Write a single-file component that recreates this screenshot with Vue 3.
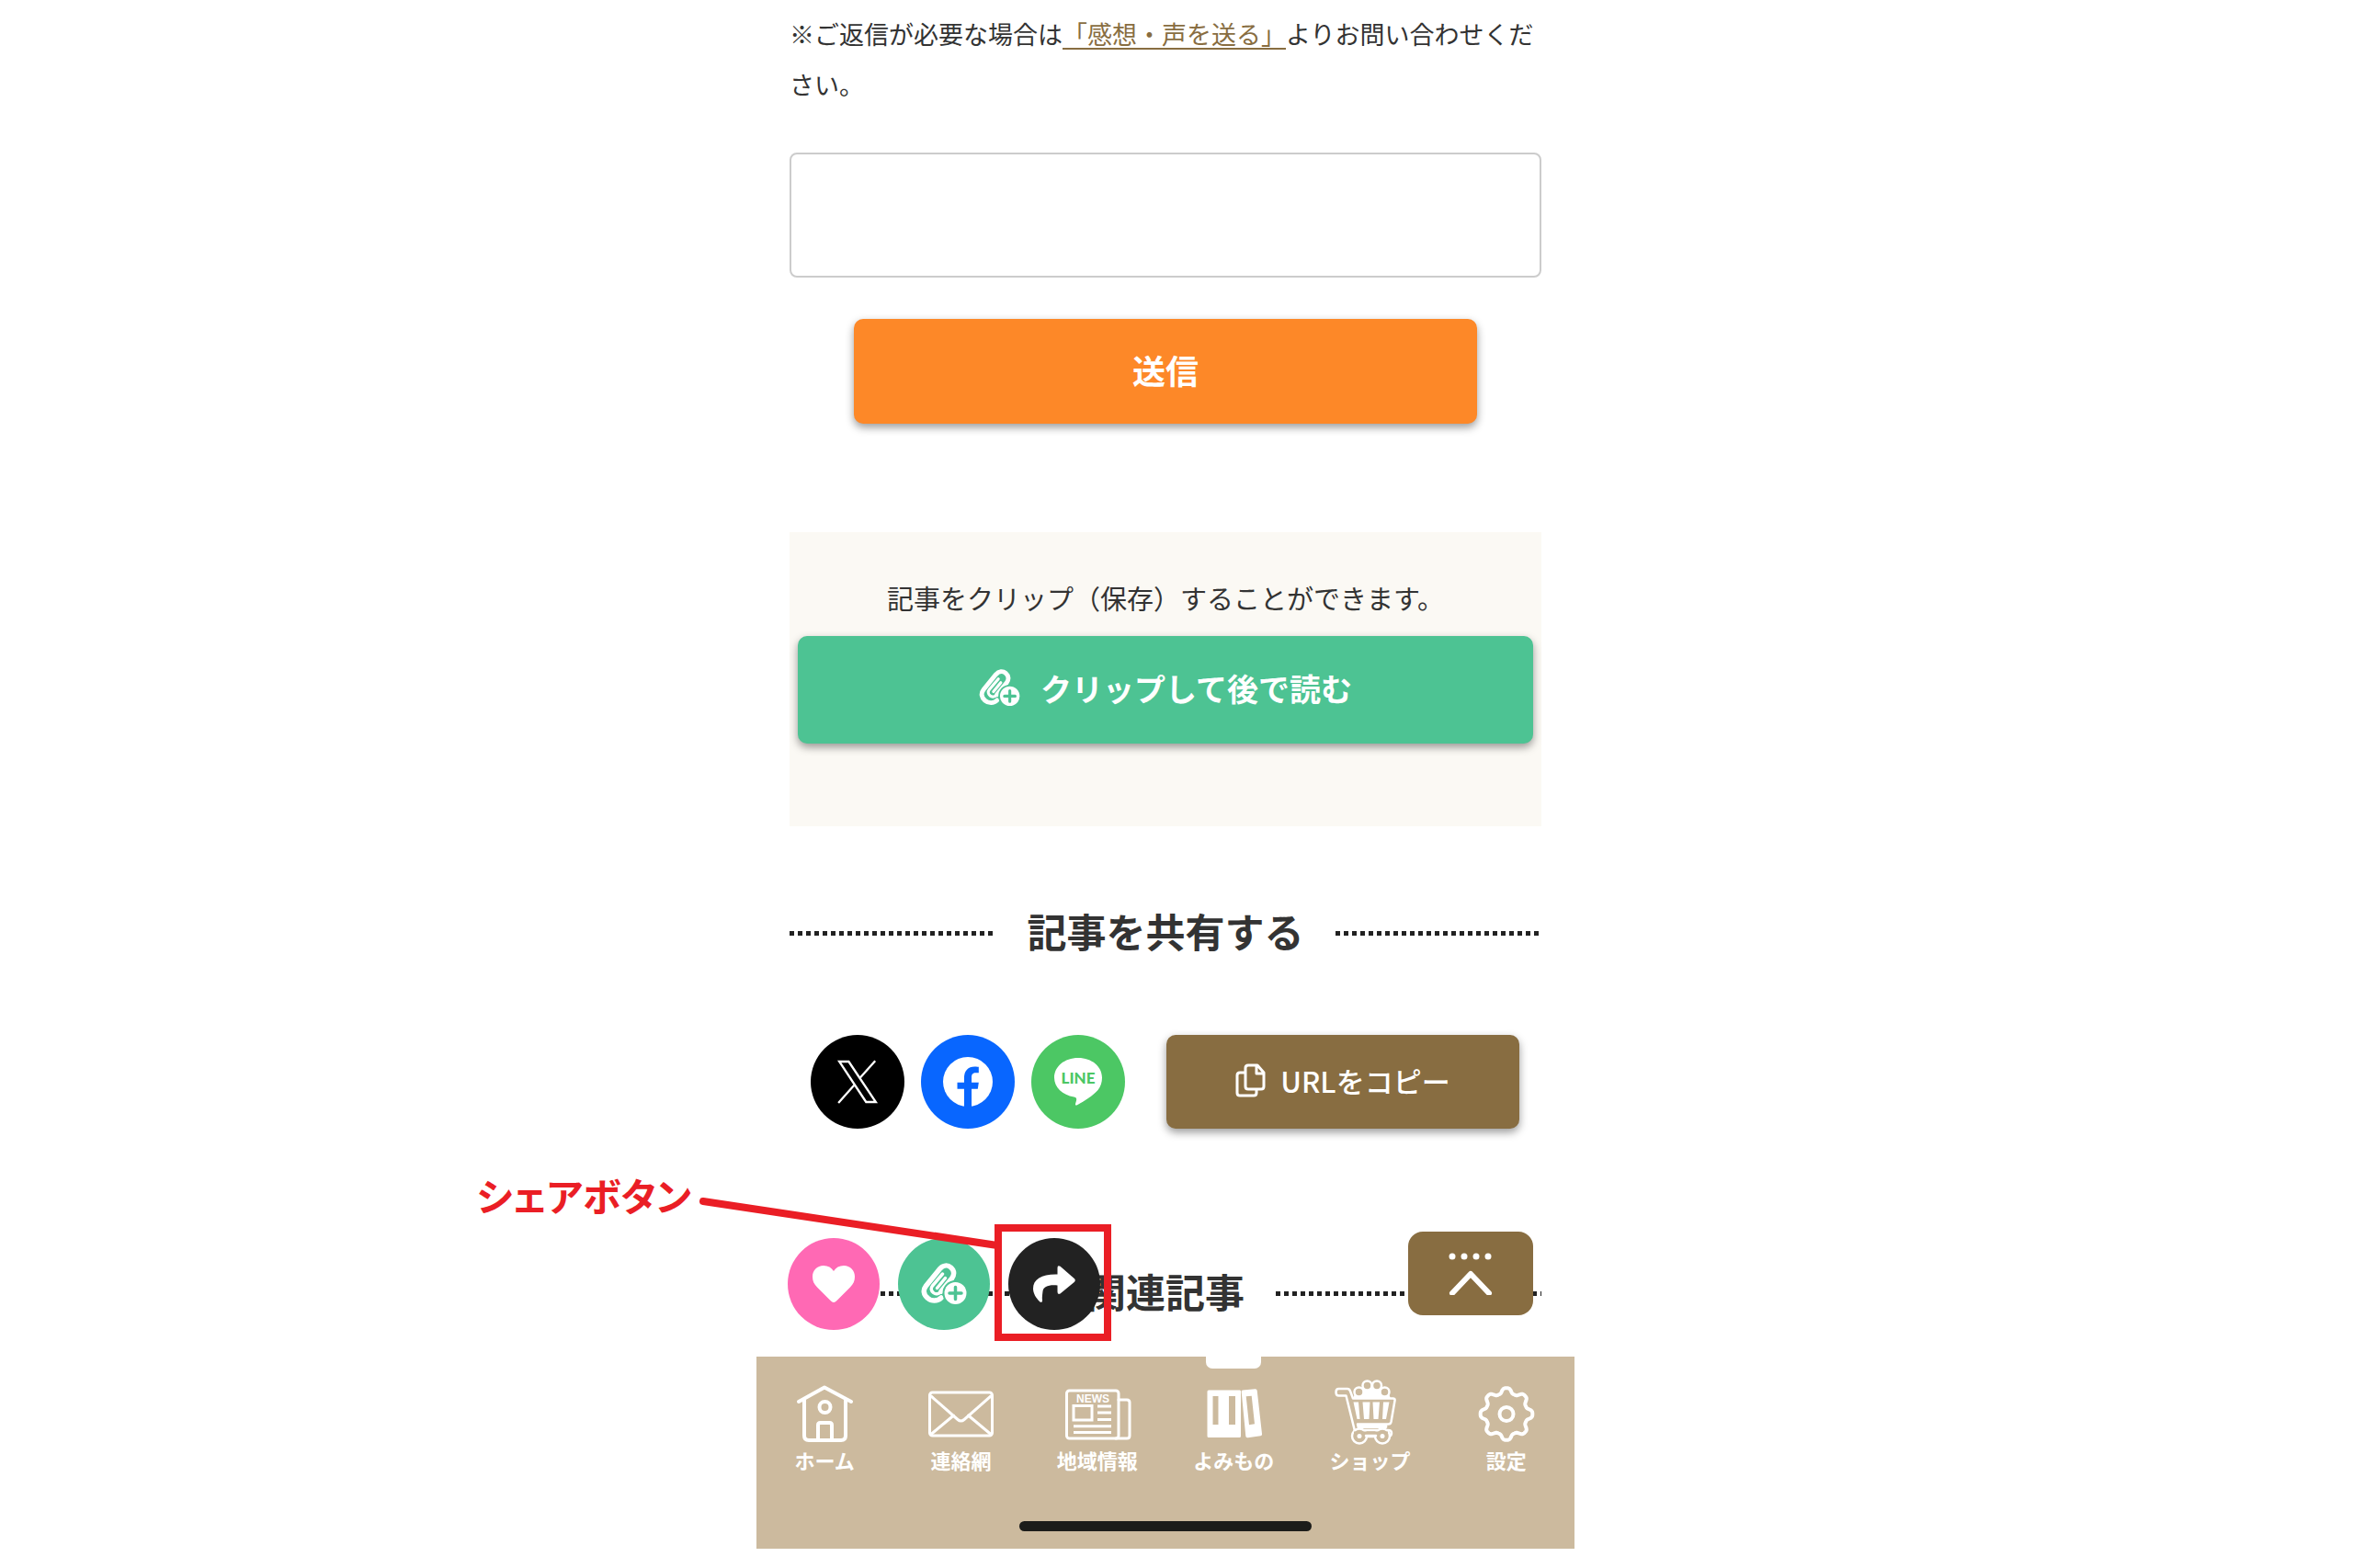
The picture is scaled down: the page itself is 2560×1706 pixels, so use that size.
<template>
    <div class="page">
        <main class="phone">
            <div class="content">
                <form class="feedback" @submit.prevent="message = ''">
                    <label class="note" for="message">※ご返信が必要な場合は<a href="#contact">「感想・声を送る」</a>よりお問い合わせください。</label>
                    <textarea id="message" v-model="message"></textarea>
                    <button class="btn btn-send" type="submit">送信</button>
                </form>

                <section class="clip-box">
                    <p>記事をクリップ（保存）することができます。</p>
                    <button class="btn btn-clip" type="button">
                        <svg class="icon-clip" viewBox="0 0 50 46">
                            <use href="#clip-shape" />
                        </svg>
                        クリップして後で読む
                    </button>
                </section>

                <h2 class="title">記事を共有する</h2>
                <div class="share">
                    <div class="socials">
                        <a class="social x" href="#x" aria-label="X">
                            <svg viewBox="120 125 138 145" width="46" height="48" fill="none" stroke="#fff" stroke-width="7">
                                <path d="M129 131H160L249 264H217ZM247 129L195 187M126 267L181 205" />
                            </svg>
                        </a>
                        <a class="social facebook" href="#facebook" aria-label="Facebook">
                            <svg viewBox="471 122 160 160" width="54" height="54">
                                <circle cx="551" cy="202" r="80" fill="#fff" />
                                <path fill="#0866ff" d="M539 285V225H517V204H539V190C539 166 552 153 573 153C579 153 586 154 586 154V173H576C565 173 563 180 563 188V204H586L583 225H563V285Z" />
                            </svg>
                        </a>
                        <a class="social line" href="#line" aria-label="LINE">
                            <svg viewBox="0 0 54 54" width="54" height="54">
                                <path fill="#fff" d="M27 1C12 1 1 10.500 1 22.500C1 33 10 41.500 22.500 43.500C25 44 25.500 45 25 47.500L24 51C23.800 52.500 24.500 53 26 52.200C34 48 43 42 48.500 36C51.500 32 53 27.500 53 22.500C53 10.500 42 1 27 1Z" />
                                <text x="27" y="29" text-anchor="middle">LINE</text>
                            </svg>
                        </a>
                    </div>
                    <button class="btn btn-copy" type="button">
                        <svg viewBox="0 0 33 37" width="33" height="37" fill="none" stroke="#fff" stroke-width="3" stroke-linejoin="round">
                            <path d="M10 10H5Q2 10 2 13V32Q2 35 5 35H20Q23 35 23 32V29" />
                            <path d="M14 2H24L31 10V25Q31 28 28 28H14Q11 28 11 25V5Q11 2 14 2ZM23 2V11H31" />
                        </svg>
                        URLをコピー
                    </button>
                </div>

                <div class="related">
                    <h2 class="title">関連記事</h2>

                    <div class="actions">
                        <button class="action like" type="button" aria-label="いいね">
                            <svg viewBox="0 0 46 40" width="46" height="40" fill="#fff">
                                <path d="M23 40C21.500 40 20.500 39 19 37.500L5 23.500C1.500 20 0 16.500 0 12C0 5 5 0 12 0C17 0 20.500 2 23 6C25.500 2 29 0 34 0C41 0 46 5 46 12C46 16.500 44.500 20 41 23.500L27 37.500C25.500 39 24.500 40 23 40Z" />
                            </svg>
                        </button>
                        <button class="action clip" type="button" aria-label="クリップ">
                            <svg viewBox="0 0 50 46" width="50" height="46">
                                <use href="#clip-shape" />
                            </svg>
                        </button>
                        <button class="action forward" type="button" aria-label="シェア">
                            <svg viewBox="0 0 46 40" width="46" height="40" fill="#fff">
                                <path d="M29.500 .7L45 14.300Q46.500 16 45 17.700L29.500 30.500Q26.500 32 26.500 28.500V21.500C17 20.500 11 23 10.500 28C10.200 31 9.500 34 10 37.500C10.200 40 8.500 40.500 7 39C3 35 0 30 0 25C0 14.500 10 9 26.500 9.500V2.500Q26.500 -1 29.500 .7Z" />
                            </svg>
                        </button>
                        <div class="callout">
                            <span>シェアボタン</span>
                            <svg viewBox="0 0 328 60" width="328" height="60">
                                <path d="M4 6L324 54" stroke="#ea1e25" stroke-width="8" stroke-linecap="round" />
                            </svg>
                        </div>
                        <div class="frame"></div>
                    </div>

                    <button class="to-top" type="button" aria-label="ページの先頭へ">
                        <svg viewBox="0 0 50 46" width="50" height="46" fill="#fff">
                            <circle cx="5" cy="4" r="3.500" />
                            <circle cx="18" cy="4" r="3.500" />
                            <circle cx="31" cy="4" r="3.500" />
                            <circle cx="44" cy="4" r="3.500" />
                            <path d="M5 44L25 23L45 44" fill="none" stroke="#fff" stroke-width="6" stroke-linecap="round" stroke-linejoin="round" />
                        </svg>
                    </button>
                </div>
            </div>

            <nav class="tabs">
                <ul>
                    <li v-for="tab in tabs" :key="tab.id" :class="{ active: tab.id === current }">
                        <a :href="'#' + tab.id" @click="current = tab.id">
                            <svg viewBox="0 0 76 76" fill="none" stroke="#fff" stroke-linecap="round" stroke-linejoin="round">
                                <g v-if="tab.id === 'home'" stroke-width="4">
                                    <path d="M10 27L38 11.500L67 27M16 25V64Q16 69 21 69H56Q61 69 61 64V25" />
                                    <path d="M31 68V52.500Q31 50 33.500 50H43.500Q46 50 46 52.500V68" />
                                    <circle cx="38.500" cy="33" r="6" />
                                </g>
                                <g v-else-if="tab.id === 'mail'" stroke-width="3">
                                    <rect x="4.500" y="17" width="68" height="47" rx="3" />
                                    <path d="M6 21L35 46.500Q38.500 49.500 42 46.500L71 21M6 62.500L30.500 42M71 62.500L46.500 42" />
                                </g>
                                <g v-else-if="tab.id === 'news'" stroke-width="3">
                                    <rect x="4.500" y="15" width="56.500" height="52" rx="3" />
                                    <path d="M61 25H70Q73 25 73 28V64Q73 67 70 67H58" />
                                    <text x="33" y="28" text-anchor="middle">NEWS</text>
                                    <rect x="12" y="31.500" width="20" height="15.500" stroke-linejoin="miter" />
                                    <path d="M38 32H53M38 39H53M38 46.500H53M12 53.700H53M12 60.500H53" stroke-linecap="butt" />
                                </g>
                                <g v-else-if="tab.id === 'read'" fill="#fff" fill-rule="evenodd" stroke="none">
                                    <path d="M11 14.500H45Q46 14.500 46 16V64.500Q46 66 44.500 66H11Q9.500 66 9.500 64.500V16Q9.500 14.500 11 14.500ZM15.500 21V52H21.500V21ZM33 21V52H40V21Z" />
                                    <path d="M48 14.500L61.500 13.200Q63.500 13 63.700 15L69 62Q69.200 64 67.500 64.300L53.500 66.300Q51.500 66.500 51.300 64.500L46.700 16.500Q46.500 14.700 48 14.500ZM51.700 21.300L55 52.300L61 51.300L57.700 20.700Z" />
                                </g>
                                <g v-else-if="tab.id === 'shop'" stroke-width="2.500">
                                    <path fill="#fff" stroke="none" d="M20 23.500L23 16L36 9H46L58 16L61 23.500Z" />
                                    <g fill="#ccba9e">
                                        <circle cx="26.500" cy="16.500" r="5" />
                                        <circle cx="35.500" cy="9.500" r="5" />
                                        <circle cx="46" cy="9.500" r="5" />
                                        <circle cx="54.500" cy="16.500" r="5" />
                                    </g>
                                    <path fill="#ccba9e" d="M4.500 13H14Q16 13 17 15.500L20 23.500H63.500Q66 23.500 65.500 26L61.500 49Q61 51.500 58.500 51.500H25L26.500 58H58Q62 58 62 61Q62 64 59.500 65H22V59L12.500 20.500H4.500Q1.500 20.500 1.500 16.700Q1.500 13 4.500 13Z" />
                                    <path stroke="none" fill="#fff" d="M25 51.500H57Q58 56 56 56H27ZM20.500 27.500H26L27.500 46H24.500ZM30.500 27.500H38.500L37.500 46H32ZM41.500 27.500H49L47.500 46H42.500ZM53 27.500H59.500L56 46H52Z" />
                                    <g fill="#ccba9e">
                                        <circle cx="27" cy="64.500" r="8" />
                                        <circle cx="52" cy="64.500" r="8" />
                                        <path stroke="none" d="M21 59.500H58V64H21Z" />
                                    </g>
                                    <path d="M34 64H45" />
                                    <g fill="#fff" stroke="none">
                                        <circle cx="27" cy="64.500" r="2.500" />
                                        <circle cx="52" cy="64.500" r="2.500" />
                                    </g>
                                </g>
                                <g v-else stroke-width="4">
                                    <path :d="gear" />
                                    <circle cx="38" cy="40.500" r="7.500" />
                                </g>
                            </svg>
                            <span>{{ tab.label }}</span>
                        </a>
                    </li>
                </ul>
                <div class="home-bar"></div>
            </nav>
        </main>

        <!-- paper clip with a plus badge, used by both clip buttons -->
        <svg class="defs" width="0" height="0">
            <g id="clip-shape" fill="none" stroke-linecap="round" stroke-linejoin="round">
                <path stroke="#fff" stroke-width="5.500" d="M22 38C18 42 11.500 42 7.500 38.500C2.500 34.500 2 29.500 5.500 25L20.500 6.500C24 2.500 29 2 32.500 5C36.500 8.500 36.500 13 33.500 17L22 31" />
                <path stroke="#fff" stroke-width="3.500" d="M24 28.500L21.500 31.500C19.500 34 16 34.500 13.500 32.500C11 30.500 10.500 27.500 12.500 25L23.500 12" />
                <path stroke="#fff" stroke-width="3.500" d="M17.500 27.500L26.500 16.500" />
                <circle cx="37.500" cy="33" r="14" fill="#4dc393" />
                <circle cx="37.500" cy="33" r="12" fill="#fff" />
                <path stroke="#4dc393" stroke-width="3.500" d="M37.500 26.500V39.500M31 33H44" />
            </g>
        </svg>
    </div>
</template>

<script setup>
import { ref } from 'vue'

const message = ref('')
const current = ref('read')

const tabs = [
    { id: 'home', label: 'ホーム' },
    { id: 'mail', label: '連絡網' },
    { id: 'news', label: '地域情報' },
    { id: 'read', label: 'よみもの' },
    { id: 'shop', label: 'ショップ' },
    { id: 'settings', label: '設定' },
]

// eight rounded teeth around the centre
function gearPath(){
    const points = []
    for (let i = 0; i < 160; i++) {
        const a = i / 160 * Math.PI * 2
        const r = 25.5 + 2.8 * Math.sin(Math.PI / 2 * Math.cos(a * 8))
        points.push((38 + r * Math.cos(a)).toFixed(1) + ' ' + (40.5 + r * Math.sin(a)).toFixed(1))
    }
    return 'M' + points.join('L') + 'Z'
}
const gear = gearPath()
</script>

<style>
    body{
        margin: 0;
        background-color: white;
    }
</style>

<style scoped>
    .page{
        font-family: "Noto Sans CJK JP", sans-serif;
        color: #333;
        padding-right: 24px;
        overflow: hidden;
    }

    .phone{
        width: 100%;
        max-width: 890px;
        margin: 0 auto;
    }

    .content{
        padding: 9px 36px 40px;
    }

    .feedback{
        display: flex;
        flex-direction: column;
        align-items: center;
    }

    .note{
        width: 100%;
        font-size: 27px;
        line-height: 55px;
    }

    .note a{
        color: #886d41;
        text-decoration-thickness: 2px;
        text-underline-offset: 4px;
    }

    textarea{
        box-sizing: border-box;
        width: 100%;
        height: 136px;
        margin: 47px 0 45px;
        padding: 16px;
        border: 2px solid #ccc;
        border-radius: 8px;
        background-color: white;
        font: inherit;
        font-size: 27px;
        resize: none;
    }

    button{
        font-family: inherit;
        border-width: 0;
        padding: 0;
        color: white;
        cursor: pointer;
    }

    .btn{
        display: flex;
        justify-content: center;
        align-items: center;
        padding-bottom: 4px;
        border-radius: 10px;
        box-shadow: 0 4px 10px rgb(0, 0, 0, 0.4);
    }

    .btn-send{
        width: 83%;
        height: 114px;
        background-color: #fd8828;
        font-size: 36px;
        font-weight: bold;
    }

    .clip-box{
        margin-top: 118px;
        padding: 50px 9px 90px;
        background-color: #fbf9f4;
    }

    .clip-box p{
        margin: 0 0 21px;
        font-size: 29px;
        line-height: 42px;
        text-align: center;
    }

    .btn-clip{
        width: 100%;
        height: 117px;
        column-gap: 22px;
        background-color: #4dc393;
        font-size: 34px;
        font-weight: bold;
    }

    .icon-clip{
        width: 45px;
        height: 41px;
    }

    .title{
        display: flex;
        align-items: center;
        column-gap: 34px;
        margin: 81px 0 82px;
        font-size: 43px;
        line-height: 64px;
        font-weight: bold;
    }

    .title::before,
    .title::after{
        content: "";
        flex: 1;
        height: 5px;
        margin-top: 6px;
        background: repeating-linear-gradient(to right, #222 0 5px, transparent 5px 9px);
    }

    .share{
        display: flex;
        justify-content: space-between;
        column-gap: 45px;
        padding: 0 24px 0 23px;
    }

    .socials{
        display: flex;
        column-gap: 18px;
    }

    .social{
        display: flex;
        justify-content: center;
        align-items: center;
        width: 102px;
        height: 102px;
        border-radius: 50%;
    }

    .x{
        background-color: black;
    }

    .facebook{
        background-color: #0866ff;
    }

    .line{
        background-color: #4cc764;
    }

    .line text{
        fill: #4cc764;
        font-family: Lato, sans-serif;
        font-size: 17px;
        font-weight: 900;
    }

    .btn-copy{
        flex: 1;
        column-gap: 16px;
        background-color: #886d41;
        font-size: 31px;
        font-weight: 500;
    }

    .related{
        position: relative;
        margin-top: 144px;
    }

    .related .title{
        margin: 0;
    }

    .actions{
        position: absolute;
        left: -2px;
        top: -25px;
        display: flex;
        column-gap: 20px;
    }

    .action{
        display: flex;
        justify-content: center;
        align-items: center;
        width: 100px;
        height: 100px;
        border-radius: 50%;
    }

    .like{
        background-color: #ff69b4;
    }

    .clip{
        background-color: #4dc393;
    }

    .forward{
        background-color: #222;
    }

    .callout{
        position: absolute;
        right: 108px;
        top: -79px;
        display: flex;
        align-items: flex-start;
        column-gap: 9px;
        color: #ea1e25;
        font-size: 42px;
        line-height: 64px;
        font-weight: bold;
        font-feature-settings: "palt";
        white-space: nowrap;
    }

    .callout svg{
        margin-top: 33px;
    }

    .frame{
        position: absolute;
        right: -12px;
        top: -15px;
        width: 111px;
        height: 111px;
        border: 8px solid #ea1e25;
    }

    .to-top{
        position: absolute;
        right: 9px;
        top: -32px;
        display: flex;
        justify-content: center;
        align-items: center;
        width: 136px;
        height: 91px;
        border-radius: 16px;
        background-color: #886d41;
    }

    .tabs{
        padding-bottom: 19px;
        background-color: #ccba9e;
    }

    .tabs ul{
        display: flex;
        margin: 0;
        padding: 0;
        list-style: none;
    }

    .tabs li{
        position: relative;
        flex: 1;
    }

    .tabs a{
        display: flex;
        flex-direction: column;
        align-items: center;
        padding-top: 22px;
        color: white;
        font-size: 22px;
        line-height: 28px;
        font-weight: bold;
        text-decoration: none;
    }

    .tabs a svg{
        width: 76px;
        height: 76px;
    }

    .tabs text{
        fill: white;
        stroke: none;
        font-family: "Liberation Sans", sans-serif;
        font-size: 12px;
        font-weight: bold;
    }

    .active::before{
        content: "";
        position: absolute;
        left: 50%;
        top: 0;
        width: 60px;
        height: 13px;
        margin-left: -30px;
        border-radius: 0 0 7px 7px;
        background-color: white;
    }

    .home-bar{
        width: 318px;
        height: 11px;
        margin: 53px auto 0;
        border-radius: 6px;
        background-color: #1c1c1a;
    }

    .defs{
        position: absolute;
    }
</style>
